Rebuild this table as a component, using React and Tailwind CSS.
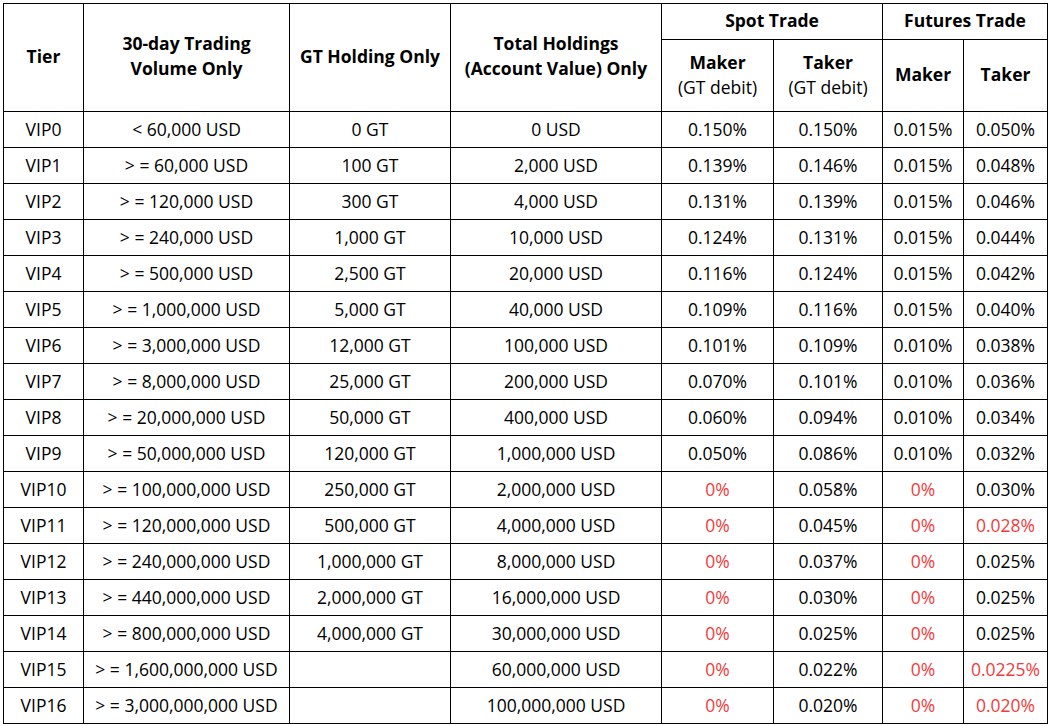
const rows = [
  ['VIP0', '< 60,000 USD', '0 GT', '0 USD', '0.150%', '0.150%', '0.015%', '0.050%'],
  ['VIP1', '> = 60,000 USD', '100 GT', '2,000 USD', '0.139%', '0.146%', '0.015%', '0.048%'],
  ['VIP2', '> = 120,000 USD', '300 GT', '4,000 USD', '0.131%', '0.139%', '0.015%', '0.046%'],
  ['VIP3', '> = 240,000 USD', '1,000 GT', '10,000 USD', '0.124%', '0.131%', '0.015%', '0.044%'],
  ['VIP4', '> = 500,000 USD', '2,500 GT', '20,000 USD', '0.116%', '0.124%', '0.015%', '0.042%'],
  ['VIP5', '> = 1,000,000 USD', '5,000 GT', '40,000 USD', '0.109%', '0.116%', '0.015%', '0.040%'],
  ['VIP6', '> = 3,000,000 USD', '12,000 GT', '100,000 USD', '0.101%', '0.109%', '0.010%', '0.038%'],
  ['VIP7', '> = 8,000,000 USD', '25,000 GT', '200,000 USD', '0.070%', '0.101%', '0.010%', '0.036%'],
  ['VIP8', '> = 20,000,000 USD', '50,000 GT', '400,000 USD', '0.060%', '0.094%', '0.010%', '0.034%'],
  ['VIP9', '> = 50,000,000 USD', '120,000 GT', '1,000,000 USD', '0.050%', '0.086%', '0.010%', '0.032%'],
  ['VIP10', '> = 100,000,000 USD', '250,000 GT', '2,000,000 USD', '0%', '0.058%', '0%', '0.030%'],
  ['VIP11', '> = 120,000,000 USD', '500,000 GT', '4,000,000 USD', '0%', '0.045%', '0%', '0.028%!'],
  ['VIP12', '> = 240,000,000 USD', '1,000,000 GT', '8,000,000 USD', '0%', '0.037%', '0%', '0.025%'],
  ['VIP13', '> = 440,000,000 USD', '2,000,000 GT', '16,000,000 USD', '0%', '0.030%', '0%', '0.025%'],
  ['VIP14', '> = 800,000,000 USD', '4,000,000 GT', '30,000,000 USD', '0%', '0.025%', '0%', '0.025%'],
  ['VIP15', '> = 1,600,000,000 USD', '', '60,000,000 USD', '0%', '0.022%', '0%', '0.0225%!'],
  ['VIP16', '> = 3,000,000,000 USD', '', '100,000,000 USD', '0%', '0.020%', '0%', '0.020%!'],
];

const widths = ['w-[80px]', 'w-[206px]', 'w-[161px]', 'w-[211px]', 'w-[112px]', 'w-[109px]', 'w-[81px]', 'w-[84px]'];

const Cell = ({ value }) => {
  // zero fees and the flagged futures rates are shown in red
  const red = value === '0%' || value.endsWith('!');
  const text = value.replace('!', '');
  return (
    <td className={`border border-black text-center p-0 h-[36px] ${red ? 'text-[#f03c3c]' : 'text-black'}`}>
      {text}
    </td>
  );
};

const App = () => (
  <div className="bg-white w-[1050px] h-[726px] pt-[3px] pl-[3px]" style={{ fontFamily: '"Open Sans", "Noto Sans", sans-serif' }}>
    <table className="border-collapse table-fixed text-[17.5px] leading-[25px] w-[1044px]">
      <colgroup>
        {widths.map((w, i) => <col key={i} className={w} />)}
      </colgroup>
      <thead>
        <tr className="h-[36px]">
          <th rowSpan={2} className="border border-black font-bold pb-[3px]">Tier</th>
          <th rowSpan={2} className="border border-black font-bold pb-[3px]">30-day Trading<br />Volume Only</th>
          <th rowSpan={2} className="border border-black font-bold pb-[3px]">GT Holding Only</th>
          <th rowSpan={2} className="border border-black font-bold pb-[3px]">Total Holdings<br />(Account Value) Only</th>
          <th colSpan={2} className="border border-black font-bold pb-[2px]">Spot Trade</th>
          <th colSpan={2} className="border border-black font-bold pb-[2px]">Futures Trade</th>
        </tr>
        <tr className="h-[72px]">
          <th className="border border-black pb-[2px]">
            <div className="font-bold">Maker</div>
            <div className="font-normal">(GT debit)</div>
          </th>
          <th className="border border-black pb-[2px]">
            <div className="font-bold">Taker</div>
            <div className="font-normal">(GT debit)</div>
          </th>
          <th className="border border-black font-bold pb-[2px]">Maker</th>
          <th className="border border-black font-bold pb-[2px]">Taker</th>
        </tr>
      </thead>
      <tbody>
        {rows.map((r) => (
          <tr key={r[0]}>
            {r.map((v, i) => <Cell key={i} value={v} />)}
          </tr>
        ))}
      </tbody>
    </table>
  </div>
);

export default App;
